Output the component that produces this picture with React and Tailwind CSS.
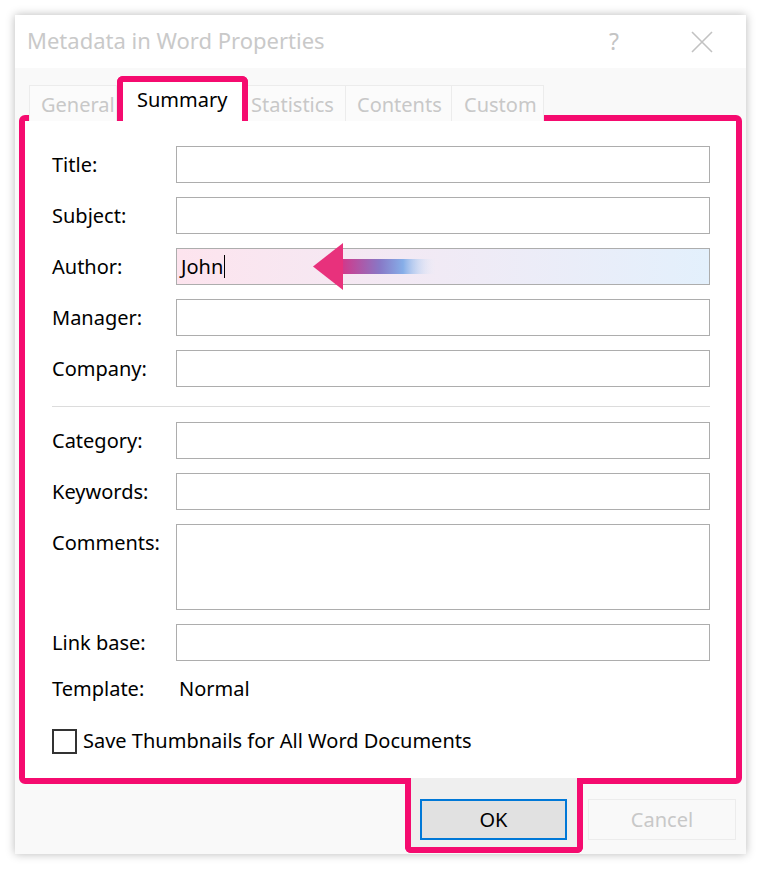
import React from "react";

const font = { fontFamily: '"Noto Sans", "Open Sans", sans-serif' };

function Row({ label, children, tall }) {
  return (
    <div className="flex items-start">
      <div className="w-[124px] h-[37px] flex items-center text-[20px] text-black shrink-0">{label}</div>
      {children || (
        <div className={`w-[534px] ${tall ? "h-[86px]" : "h-[37px]"} border border-[#adadad] bg-white`} />
      )}
    </div>
  );
}

export default function App() {
  return (
    <div className="w-[761px] h-[869px] bg-white pt-[15px] pl-[15px]" style={font}>
      <div className="w-[731px] h-[839px] bg-[#f9f9f9] shadow-[0_0_9px_rgba(0,0,0,0.28)] flex flex-col">
        {/* Title bar */}
        <div className="h-[53px] bg-white flex items-center pl-[12px] pr-[33px] shrink-0">
          <div className="text-[22px] text-[#c9c9c9] flex-1 leading-none pb-[3px]">Metadata in Word Properties</div>
          <div className="text-[23px] text-[#c4c4c4] leading-none mr-[72px]">?</div>
          <svg width="22" height="22" viewBox="0 0 22 22">
            <path d="M1 1 L21 21 M21 1 L1 21" stroke="#c2c2c2" strokeWidth="1.6" />
          </svg>
        </div>

        {/* Tabs */}
        <div className="flex items-end pl-[14px] h-[47px] shrink-0 relative z-10">
          <div className="h-[36px] mb-[-6px] px-[11px] border border-b-0 border-[#ececec] bg-[#fbfbfb] text-[20px] text-[#c8c8c8] pt-[4px] w-[88px] leading-[30px] overflow-hidden">General</div>
          <div className="h-[45px] mb-[-6px] w-[131px] border-[6px] border-b-0 border-[#f50b6f] rounded-t-[6px] bg-white text-[20px] text-black pt-[3px] pl-[14px] leading-[30px]">Summary</div>
          <div className="h-[36px] mb-[-6px] pl-[3px] border border-b-0 border-l-0 border-[#ececec] bg-[#fbfbfb] text-[20px] text-[#c8c8c8] pt-[4px] w-[98px] leading-[30px] overflow-hidden">Statistics</div>
          <div className="h-[36px] mb-[-6px] pl-[11px] border border-b-0 border-l-0 border-[#ececec] bg-[#fbfbfb] text-[20px] text-[#c8c8c8] pt-[4px] w-[106px] leading-[30px] overflow-hidden">Contents</div>
          <div className="h-[36px] mb-[-6px] pl-[12px] border border-b-0 border-l-0 border-[#ececec] bg-[#fbfbfb] text-[20px] text-[#c8c8c8] pt-[4px] w-[92px] leading-[30px] overflow-hidden">Custom</div>
        </div>

        {/* Panel */}
        <div className="mx-[4px] w-[723px] h-[669px] border-[6px] border-[#f50b6f] rounded-[6px] bg-white pl-[27px] pt-[25px] shrink-0">
          <div className="flex flex-col gap-[14px]">
            <Row label="Title:" />
            <Row label="Subject:" />
            <Row label="Author:">
              <div className="w-[534px] h-[37px] border border-[#adadad] bg-gradient-to-r from-[#fde4ee] to-[#e3f0fc] relative flex items-center pl-[4px] text-[20px] text-black">
                <span>John</span>
                <span className="inline-block w-[1px] h-[23px] bg-black ml-[1px]" />
                <svg className="absolute left-[136px] top-[-6px]" width="125" height="47" viewBox="0 0 125 47">
                  <defs>
                    <linearGradient id="shaft" x1="0" x2="1" y1="0" y2="0">
                      <stop offset="0" stopColor="#d2388a" />
                      <stop offset="0.4" stopColor="#8878c6" />
                      <stop offset="0.65" stopColor="#86aee8" />
                      <stop offset="1" stopColor="#e6f0fb" stopOpacity="0" />
                    </linearGradient>
                  </defs>
                  <rect x="29" y="16" width="94" height="15" fill="url(#shaft)" />
                  <path d="M0 23.5 L30 0 L30 47 Z" fill="#e8317c" />
                </svg>
              </div>
            </Row>
            <Row label="Manager:" />
            <Row label="Company:" />
          </div>
          <div className="w-[658px] h-px bg-[#dcdcdc] mt-[19px] mb-[15px]" />
          <div className="flex flex-col gap-[14px]">
            <Row label="Category:" />
            <Row label="Keywords:" />
            <Row label="Comments:" tall />
            <Row label="Link base:" />
          </div>
          <div className="flex items-center h-[26px] mt-[15px] text-[20px] text-black">
            <div className="w-[127px]">Template:</div>
            <div>Normal</div>
          </div>
          <div className="flex items-center mt-[24px] text-[20px] text-black">
            <div className="w-[25px] h-[25px] border-2 border-[#333] bg-white mr-[6px]" />
            <span>Save Thumbnails for All Word Documents</span>
          </div>
        </div>

        {/* Buttons */}
        <div className="flex items-start justify-end pr-[10px] mt-[-6px] relative">
          <div className="w-[178px] h-[75px] border-[6px] border-t-0 border-[#f50b6f] rounded-b-[6px] bg-[#efefef] pt-[21px] pl-[9px]">
            <div className="w-[147px] h-[41px] border-2 border-[#0078d7] bg-[#e1e1e1] flex items-center justify-center text-[20px] text-black">OK</div>
          </div>
          <div className="ml-[5px] mt-[21px] w-[148px] h-[41px] border border-[#ececec] bg-[#f9f9f9] flex items-center justify-center text-[20px] text-[#c8c8c8]">Cancel</div>
        </div>
      </div>
    </div>
  );
}
